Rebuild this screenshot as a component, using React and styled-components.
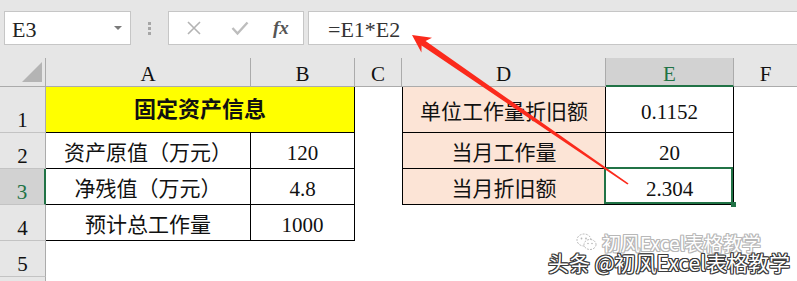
import React from "react";
import styled, { createGlobalStyle } from "styled-components";

const Global = createGlobalStyle`
  html, body { margin: 0; padding: 0; background: #fff; overflow: hidden; }
  * { box-sizing: border-box; }
`;

const SERIF = `"Liberation Serif", "Noto Sans CJK SC", serif`;
const CJK = `"Liberation Serif", "Noto Sans CJK SC", sans-serif`;
const GREEN = "#217346";

const Frame = styled.div`
  position: relative;
  width: 797px;
  height: 281px;
  overflow: hidden;
  background: #fff;
`;

const Toolbar = styled.div`
  height: 58px;
  background: #e6e6e6;
  display: flex;
  align-items: flex-start;
  padding: 11px 0 0 4px;
`;

const Box = styled.div`
  height: 34px;
  background: #fff;
  border: 1px solid #c6c6c6;
  display: flex;
  align-items: center;
`;

const NameBox = styled(Box)`
  width: 127px;
  padding-left: 7px;
  font-family: ${SERIF};
  font-size: 22px;
  color: #222;
  position: relative;
  line-height: 28px;
  align-items: flex-end;
`;

const Caret = styled.span`
  position: absolute;
  right: 8px;
  top: 14px;
  width: 0;
  height: 0;
  border-left: 4px solid transparent;
  border-right: 4px solid transparent;
  border-top: 4px solid #7a7a7a;
`;

const Splitter = styled.div`
  width: 37px;
  height: 34px;
  display: flex;
  flex-direction: column;
  align-items: center;
  justify-content: center;
  gap: 2px;
`;

const Dot = styled.span`
  width: 3px;
  height: 3px;
  background: #a6a6a6;
`;

const IconBox = styled(Box)`
  width: 136px;
  padding-left: 14px;
  gap: 24px;
`;

const IconSlot = styled.span`
  width: 22px;
  height: 22px;
  display: flex;
  align-items: center;
  justify-content: center;
`;

const Fx = styled.span`
  font-family: ${SERIF};
  font-style: italic;
  font-weight: bold;
  font-size: 19px;
  color: #555;
  margin-left: -2px;
`;

const FormulaInput = styled(Box)`
  flex: 1;
  margin-left: 4px;
  border-right: none;
  padding-left: 19px;
  font-family: ${SERIF};
  font-size: 22px;
  color: #333;
  line-height: 28px;
  align-items: flex-end;
`;

const Sheet = styled.div`
  display: grid;
  grid-template-columns: 46px 205px 104px 47px 204px 128px 1fr;
  grid-template-rows: 29px 46px 36px 36px 36px 36px 36px;
`;

const Corner = styled.div`
  background: #e6e6e6;
  border-right: 1px solid #ababab;
  border-bottom: 1px solid #ababab;
  position: relative;
  &::after {
    content: "";
    position: absolute;
    right: 3px;
    bottom: 4px;
    width: 0;
    height: 0;
    border-left: 20px solid transparent;
    border-bottom: 20px solid #b4b4b4;
  }
`;

const ColHeader = styled.div`
  background: ${(p) => (p.$sel ? "#d2d2d2" : "#e6e6e6")};
  border-right: ${(p) => (p.$last ? "none" : "1px solid #ababab")};
  border-bottom: ${(p) => (p.$sel ? `2px solid ${GREEN}` : "1px solid #ababab")};
  color: ${(p) => (p.$sel ? GREEN : "#111")};
  font-family: ${SERIF};
  font-size: 21px;
  line-height: 22px;
  display: flex;
  justify-content: center;
  align-items: flex-end;
  padding-bottom: ${(p) => (p.$sel ? "0px" : "1px")};
`;

const RowHeader = styled.div`
  background: ${(p) => (p.$sel ? "#d2d2d2" : "#e6e6e6")};
  border-right: ${(p) => (p.$sel ? `2px solid ${GREEN}` : "1px solid #ababab")};
  border-bottom: 1px solid #c3c3c3;
  color: ${(p) => (p.$sel ? GREEN : "#111")};
  font-family: ${SERIF};
  font-size: 21px;
  line-height: 24px;
  display: flex;
  justify-content: center;
  align-items: flex-end;
`;

const Cell = styled.div`
  position: relative;
  grid-column: ${(p) => (p.$span ? `span ${p.$span}` : "auto")};
  background: ${(p) => p.$bg || "#fff"};
  border-left: ${(p) => (p.$bl ? "1px solid #000" : "none")};
  border-right: ${(p) => (p.$br ? "1px solid #000" : "none")};
  border-bottom: ${(p) => (p.$bb ? "1px solid #000" : "none")};
  font-family: ${CJK};
  font-size: ${(p) => (p.$head ? "22px" : "21px")};
  font-weight: ${(p) => (p.$head ? "bold" : "normal")};
  color: #111;
  line-height: 28px;
  display: flex;
  justify-content: center;
  align-items: center;
  padding-top: ${(p) => (p.$head ? "1px" : "5px")};
  white-space: nowrap;
  ${(p) =>
    p.$active &&
    `
    &::after {
      content: "";
      position: absolute;
      top: -2px; left: -2px; right: 0; bottom: 0;
      border: 2px solid ${GREEN};
      pointer-events: none;
    }
    &::before {
      content: "";
      position: absolute;
      right: -3px; bottom: -3px;
      width: 5px; height: 5px;
      background: ${GREEN};
      z-index: 2;
    }
  `}
`;

const Overlay = styled.svg`
  position: absolute;
  left: 0;
  top: 0;
  pointer-events: none;
`;

const Watermark = styled.div`
  position: absolute;
  left: ${(p) => p.$x}px;
  top: ${(p) => p.$y}px;
  display: flex;
  align-items: center;
  gap: 4px;
  font-family: "Noto Sans CJK SC", "Noto Sans", sans-serif;
  font-size: ${(p) => p.$size}px;
  line-height: 1;
  color: #fff;
  white-space: nowrap;
  text-shadow: ${(p) =>
    `1px 0 0 ${p.$ink}, -1px 0 0 ${p.$ink}, 0 1px 0 ${p.$ink}, 0 -1px 0 ${p.$ink}, 1px 1px 0 ${p.$ink}, -1px -1px 0 ${p.$ink}, 1px -1px 0 ${p.$ink}, -1px 1px 0 ${p.$ink}`};
`;

export default function App() {
  return (
    <Frame>
      <Global />
      <Toolbar>
        <NameBox>
          E3
          <Caret />
        </NameBox>
        <Splitter>
          <Dot />
          <Dot />
          <Dot />
        </Splitter>
        <IconBox>
          <IconSlot>
            <svg width="16" height="16" viewBox="0 0 16 16">
              <path d="M2 2 L14 14 M14 2 L2 14" stroke="#b3b3b3" strokeWidth="1.6" fill="none" />
            </svg>
          </IconSlot>
          <IconSlot>
            <svg width="18" height="16" viewBox="0 0 18 16">
              <path d="M1.5 8 L6.5 13.5 L16.5 2.5" stroke="#bdbdbd" strokeWidth="2.4" fill="none" />
            </svg>
          </IconSlot>
          <Fx>fx</Fx>
        </IconBox>
        <FormulaInput>=E1*E2</FormulaInput>
      </Toolbar>

      <Sheet>
        <Corner />
        <ColHeader>A</ColHeader>
        <ColHeader>B</ColHeader>
        <ColHeader>C</ColHeader>
        <ColHeader>D</ColHeader>
        <ColHeader $sel>E</ColHeader>
        <ColHeader $last>F</ColHeader>

        <RowHeader>1</RowHeader>
        <Cell $span={2} $bg="#ffff00" $br $bb $head>固定资产信息</Cell>
        <Cell />
        <Cell $bg="#fce4d6" $bl $br $bb>单位工作量折旧额</Cell>
        <Cell $br $bb>0.1152</Cell>
        <Cell />

        <RowHeader>2</RowHeader>
        <Cell $br $bb>资产原值（万元）</Cell>
        <Cell $br $bb>120</Cell>
        <Cell />
        <Cell $bg="#fce4d6" $bl $br $bb>当月工作量</Cell>
        <Cell $br $bb>20</Cell>
        <Cell />

        <RowHeader $sel>3</RowHeader>
        <Cell $br $bb>净残值（万元）</Cell>
        <Cell $br $bb>4.8</Cell>
        <Cell />
        <Cell $bg="#fce4d6" $bl $br $bb>当月折旧额</Cell>
        <Cell $br $bb $active>2.304</Cell>
        <Cell />

        <RowHeader>4</RowHeader>
        <Cell $br $bb>预计总工作量</Cell>
        <Cell $br $bb>1000</Cell>
        <Cell />
        <Cell />
        <Cell />
        <Cell />

        <RowHeader>5</RowHeader>
        <Cell />
        <Cell />
        <Cell />
        <Cell />
        <Cell />
        <Cell />

        <RowHeader />
        <Cell />
        <Cell />
        <Cell />
        <Cell />
        <Cell />
        <Cell />
      </Sheet>

      <Overlay width="797" height="281" viewBox="0 0 797 281">
        <polygon
          points="412,35 432,37.8 425.6,41 628.6,183.4 627.4,184.6 421.6,45.6 421.4,52.6"
          fill="#fb2a1c"
        />
      </Overlay>

      <Watermark $x={576} $y={232} $size={19} $ink="#b8b8b8">
        <svg width="22" height="20" viewBox="0 0 22 20">
          <ellipse cx="8" cy="8" rx="7" ry="6" fill="#fff" stroke="#b8b8b8" strokeWidth="1" strokeDasharray="2 1.2" />
          <ellipse cx="14" cy="12.5" rx="6" ry="5" fill="#fff" stroke="#b8b8b8" strokeWidth="1" strokeDasharray="2 1.2" />
          <circle cx="5.5" cy="6.5" r="0.9" fill="#b8b8b8" />
          <circle cx="10" cy="6.5" r="0.9" fill="#b8b8b8" />
          <circle cx="12" cy="11.5" r="0.8" fill="#b8b8b8" />
          <circle cx="16" cy="11.5" r="0.8" fill="#b8b8b8" />
        </svg>
        <span>初风Excel表格教学</span>
      </Watermark>
      <Watermark $x={548} $y={252} $size={21} $ink="#3a3a3a">
        头条 @初风Excel表格教学
      </Watermark>
    </Frame>
  );
}
